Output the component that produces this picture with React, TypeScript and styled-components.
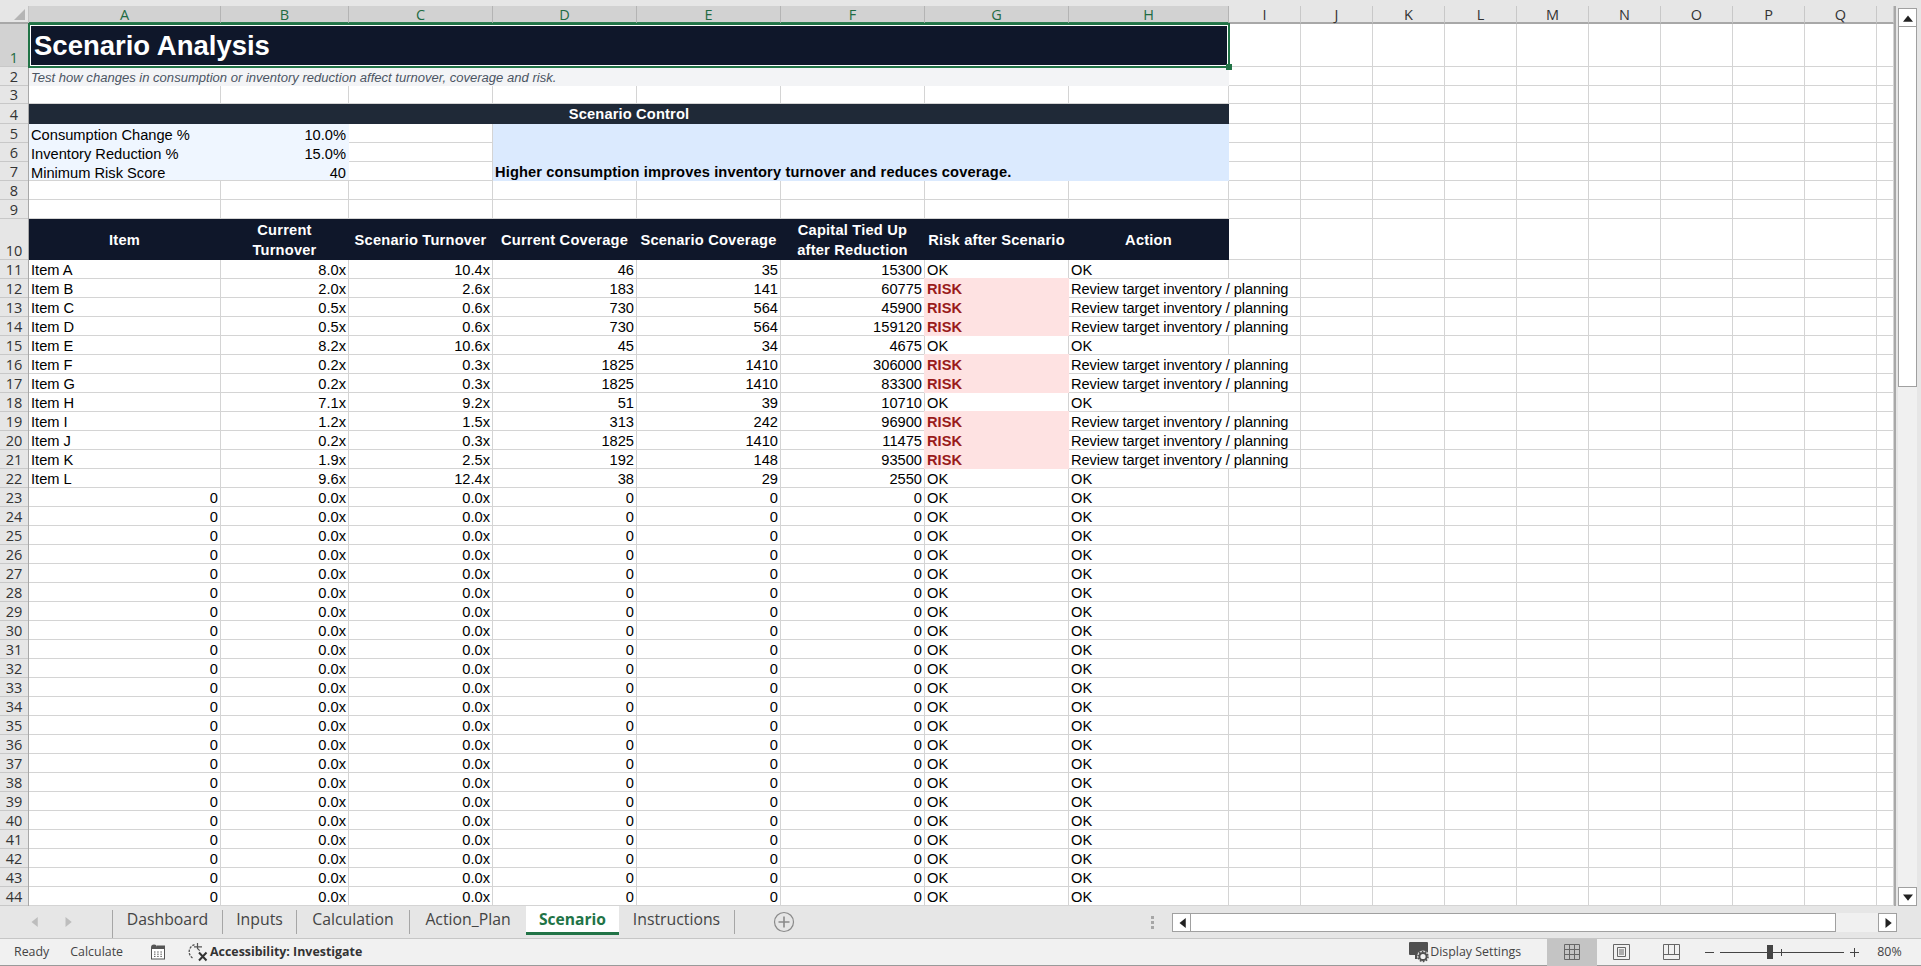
import React from "react";
import styled, { createGlobalStyle } from "styled-components";

const Global = createGlobalStyle`
  html, body { margin: 0; padding: 0; background: #e6e6e6; overflow: hidden; }
  #root { width: 1921px; height: 966px; }
  * { box-sizing: border-box; }
`;

const UI = `"Open Sans", "Noto Sans", "Liberation Sans", sans-serif`;
const CELL = `"Liberation Sans", Arial, sans-serif`;
const GRID = "#d4d4d4";

const Page = styled.div`
  width: 1921px;
  height: 966px;
  display: flex;
  flex-direction: column;
  background: #e6e6e6;
  overflow: hidden;
`;
const TopStrip = styled.div`
  height: 6px;
  flex: none;
  background: #e6e6e6;
`;
const Main = styled.div`
  height: 900px;
  flex: none;
  display: flex;
`;
const Sheet = styled.div`
  width: 1896px;
  height: 900px;
  flex: none;
  display: grid;
  grid-template-columns: 29px 192px 128px 144px 144px 144px 144px 144px 160px repeat(9, 72px) 17px;
  grid-template-rows: 18px 43px 19px 18px 20px 19px 19px 19px 19px 19px 41px repeat(34, 19px);
  background: #fff;
  border-right: 2px solid #a8a8a8;
  overflow: hidden;
`;
const Corner = styled.div`
  background: #e6e6e6;
  border-right: 1px solid #c4c4c4;
  border-bottom: 2px solid #a8a8a8;
  position: relative;
  &::after {
    content: "";
    position: absolute;
    right: 3px;
    bottom: 2px;
    border-style: solid;
    border-width: 0 0 11px 11px;
    border-color: transparent transparent #b5b5b5 transparent;
  }
`;
const ColHead = styled.div<{ $on?: boolean }>`
  background: ${(p) => (p.$on ? "#d2d2d2" : "#e6e6e6")};
  color: ${(p) => (p.$on ? "#1f6b43" : "#333")};
  border-right: 1px solid ${(p) => (p.$on ? "#b4b4b4" : "#c8c8c8")};
  border-bottom: 2px solid ${(p) => (p.$on ? "#2d7a50" : "#a8a8a8")};
  font: 14.5px/17px ${UI};
  text-align: center;
`;
const RowHead = styled.div<{ $on?: boolean }>`
  background: ${(p) => (p.$on ? "#d2d2d2" : "#e6e6e6")};
  color: ${(p) => (p.$on ? "#1f6b43" : "#333")};
  box-shadow: inset -1px 0 0 ${(p) => (p.$on ? "#2d7a50" : "#a8a8a8")}, inset 0 -1px 0 #c8c8c8;
  font: 14.5px/18px ${UI};
  display: flex;
  align-items: flex-end;
  justify-content: center;
  padding-right: 1px;
`;
const Cell = styled.div<{ $right?: boolean; $open?: boolean }>`
  display: flex;
  align-items: flex-end;
  justify-content: ${(p) => (p.$right ? "flex-end" : "flex-start")};
  padding: 0 3px 0 2px;
  min-width: 0;
  white-space: nowrap;
  font: 14.67px/18px ${CELL};
  color: #000;
  box-shadow: inset 0 -1px 0 ${GRID} ${(p) => (p.$open ? "" : `, inset -1px 0 0 ${GRID}`)};
`;
const ActionCell = styled(Cell)`
  letter-spacing: -0.1px;
`;
const TitleCell = styled.div`
  grid-column: span 8;
  background: #0f172a;
  color: #fff;
  font: bold 27.5px/44px ${CELL};
  padding-left: 5px;
  position: relative;
  z-index: 2;
  box-shadow: 0 0 0 1px #217346, inset 0 0 0 1px #217346, inset 0 0 0 2px #fff;
  &::after {
    content: "";
    position: absolute;
    right: -3px;
    bottom: -3px;
    width: 6px;
    height: 6px;
    background: #217346;
  }
`;
const SubtitleCell = styled.div`
  grid-column: span 8;
  background: #f3f4f6;
  color: #4b5563;
  font: italic 13.05px/20px ${CELL};
  padding: 1px 0 0 2px;
`;
const BandCell = styled.div`
  grid-column: span 8;
  background: #1f2937;
  color: #fff;
  font: bold 14.67px/21px ${CELL};
  letter-spacing: 0.15px;
  text-align: center;
`;
const InputCell = styled(Cell)<{ $last?: boolean }>`
  background: #eff6ff;
  align-items: flex-start;
  padding-top: 2px;
  box-shadow: ${(p) => (p.$last ? `inset 0 -1px 0 ${GRID}` : "none")};
`;
const NoteCell = styled.div`
  grid-column: span 5;
  grid-row: span 3;
  background: #dbeafe;
  font: bold 14.67px/18px ${CELL};
  letter-spacing: 0.12px;
  color: #000;
  display: flex;
  align-items: flex-end;
  padding: 0 2px;
`;
const HeadCell = styled.div`
  background: #0f172a;
  color: #fff;
  font: bold 14.67px/20px ${CELL};
  letter-spacing: 0.2px;
  display: flex;
  align-items: center;
  justify-content: center;
  text-align: center;
  padding-right: 1px;
`;
const RiskCell = styled.div`
  background: #fee2e2;
  color: #991b1b;
  font: bold 14.67px/18px ${CELL};
  margin: -1px 0 0 -1px;
  padding: 0 3px;
  display: flex;
  align-items: flex-end;
`;

const TabBar = styled.div`
  height: 32px;
  flex: none;
  display: flex;
  align-items: flex-start;
  background: #e6e6e6;
`;
const TabNav = styled.div`
  width: 112px;
  height: 32px;
  flex: none;
  display: flex;
  align-items: center;
  gap: 24px;
  padding-left: 29px;
`;
const Tabs = styled.div`
  display: flex;
  height: 29px;
  border-left: 1px solid #a6a6a6;
  margin-top: 4px;
`;
const Tab = styled.div<{ $w: number }>`
  width: ${(p) => p.$w}px;
  height: 24px;
  border-right: 1px solid #a6a6a6;
  color: #444;
  font: 15.8px/18px ${UI};
  text-align: center;
`;
const ActiveTab = styled.div<{ $w: number }>`
  width: ${(p) => p.$w}px;
  height: 29px;
  margin: -4px 0 0 -1px;
  background: #fff;
  border-bottom: 3px solid #217346;
  color: #217346;
  font: bold 15.6px/26px ${UI};
  text-align: center;
`;
const AddButton = styled.div`
  margin: 5px 0 0 38px;
  width: 22px;
  height: 22px;
  flex: none;
  display: flex;
`;
const Dots = styled.div`
  margin: 10px 0 0 356px;
  width: 3px;
  height: 13px;
  flex: none;
  background: repeating-linear-gradient(#a6a6a6 0 3px, transparent 3px 5px);
`;
const HScroll = styled.div`
  margin: 7px 0 0 18px;
  width: 725px;
  height: 19px;
  flex: none;
  display: flex;
  background: #f0f0f0;
`;
const ScrollBtn = styled.div`
  width: 19px;
  height: 19px;
  flex: none;
  background: #fff;
  border: 1px solid #a0a0a0;
  display: flex;
  align-items: center;
  justify-content: center;
`;
const HThumb = styled.div`
  width: 645px;
  flex: none;
  background: #fff;
  border: 1px solid #a0a0a0;
  border-left: none;
`;
const HTrack = styled.div`
  flex: 1;
`;
const VScroll = styled.div`
  flex: 1;
  display: flex;
  flex-direction: column;
  padding: 2px 4px 0 2px;
  background: #e6e6e6;
`;
const VThumb = styled.div`
  height: 360px;
  flex: none;
  background: #fff;
  border: 1px solid #a0a0a0;
  border-top: none;
`;
const VTrack = styled.div`
  flex: 1;
  background: #f0f0f0;
`;
const Status = styled.div`
  height: 28px;
  flex: none;
  display: flex;
  align-items: center;
  background: #f1f1f1;
  border-top: 1px solid #c6c6c6;
  border-bottom: 1px solid #9a9a9a;
  color: #444;
  font: 12.4px/18px ${UI};
`;
const StatusText = styled.span<{ $ml: number }>`
  margin-left: ${(p) => p.$ml}px;
  flex: none;
`;
const StatusIcon = styled.div<{ $ml: number }>`
  margin-left: ${(p) => p.$ml}px;
  display: flex;
  flex: none;
`;
const A11yText = styled.span`
  margin-left: 1px;
  flex: none;
  font-weight: 700;
  color: #333;
`;
const ViewButton = styled.div`
  margin-left: 26px;
  width: 50px;
  height: 27px;
  flex: none;
  background: #c4c4c4;
  display: flex;
  align-items: center;
  justify-content: center;
`;
const Zoom = styled.div`
  margin-left: 6px;
  width: 124px;
  height: 1px;
  flex: none;
  background: #444;
  position: relative;
`;
const ZoomThumb = styled.div`
  position: absolute;
  left: 47px;
  top: -7px;
  width: 6px;
  height: 14px;
  background: #444;
`;
const ZoomTick = styled.div`
  position: absolute;
  left: 61px;
  top: -3px;
  width: 1px;
  height: 7px;
  background: #444;
`;

const cols = ["A", "B", "C", "D", "E", "F", "G", "H"];
const extraCols = ["I", "J", "K", "L", "M", "N", "O", "P", "Q", ""];

type Row = [string, string, string, number, number, number];
const items: Row[] = [
  ["Item A", "8.0x", "10.4x", 46, 35, 15300],
  ["Item B", "2.0x", "2.6x", 183, 141, 60775],
  ["Item C", "0.5x", "0.6x", 730, 564, 45900],
  ["Item D", "0.5x", "0.6x", 730, 564, 159120],
  ["Item E", "8.2x", "10.6x", 45, 34, 4675],
  ["Item F", "0.2x", "0.3x", 1825, 1410, 306000],
  ["Item G", "0.2x", "0.3x", 1825, 1410, 83300],
  ["Item H", "7.1x", "9.2x", 51, 39, 10710],
  ["Item I", "1.2x", "1.5x", 313, 242, 96900],
  ["Item J", "0.2x", "0.3x", 1825, 1410, 11475],
  ["Item K", "1.9x", "2.5x", 192, 148, 93500],
  ["Item L", "9.6x", "12.4x", 38, 29, 2550],
];
const riskItems = new Set(["Item B", "Item C", "Item D", "Item F", "Item G", "Item I", "Item J", "Item K"]);

const Filler = () => (
  <>
    {extraCols.map((c, i) => (
      <Cell key={i} />
    ))}
  </>
);
const Blank = ({ n }: { n: number }) => (
  <>
    {Array.from({ length: n }, (_, i) => (
      <Cell key={i} />
    ))}
  </>
);

const Tri = ({ dir, color = "#222", size = 8 }: { dir: "l" | "r" | "u" | "d"; color?: string; size?: number }) => {
  const pts = { l: "7,0 7,8 2,4", r: "2,0 2,8 7,4", u: "0,7 8,7 4,2", d: "0,2 8,2 4,7" }[dir];
  return (
    <svg width={size} height={size} viewBox="0 0 8 8">
      <polygon points={pts} fill={color} />
    </svg>
  );
};

const DataRow = ({ row, n }: { row: Row; n: number }) => {
  const risk = riskItems.has(row[0]);
  return (
    <>
      <RowHead>{n}</RowHead>
      <Cell>{row[0]}</Cell>
      <Cell $right>{row[1]}</Cell>
      <Cell $right>{row[2]}</Cell>
      <Cell $right>{row[3]}</Cell>
      <Cell $right>{row[4]}</Cell>
      <Cell $right>{row[5]}</Cell>
      {risk ? <RiskCell>RISK</RiskCell> : <Cell>OK</Cell>}
      {risk ? <ActionCell $open>Review target inventory / planning</ActionCell> : <Cell>OK</Cell>}
      <Filler />
    </>
  );
};

const ZeroRow = ({ n }: { n: number }) => (
  <>
    <RowHead>{n}</RowHead>
    <Cell $right>0</Cell>
    <Cell $right>0.0x</Cell>
    <Cell $right>0.0x</Cell>
    <Cell $right>0</Cell>
    <Cell $right>0</Cell>
    <Cell $right>0</Cell>
    <Cell>OK</Cell>
    <Cell>OK</Cell>
    <Filler />
  </>
);

const MacroIcon = () => (
  <svg width="16" height="16" viewBox="0 0 16 16">
    <circle cx="4" cy="3.5" r="3" fill="#555" />
    <rect x="1.5" y="4.5" width="13" height="10.5" fill="#fff" stroke="#555" />
    <rect x="7" y="1.5" width="8" height="3.5" fill="#555" />
    <path d="M4 8h1.5M7.2 8h1.5M10.4 8h1.5M4 10.2h1.5M7.2 10.2h1.5M10.4 10.2h1.5M4 12.4h1.5M7.2 12.4h1.5M10.4 12.4h1.5" stroke="#555" />
  </svg>
);
const A11yIcon = () => (
  <svg width="21" height="20" viewBox="0 0 21 20" fill="none">
    <path d="M6.5 2.6A7.5 7.5 0 0 0 4.5 16" stroke="#555" strokeWidth="1.3" strokeDasharray="2.4 1.2" />
    <path d="M9.5 1v5.5l2.2 2.2M6 4.8h8" stroke="#555" strokeWidth="1.2" />
    <path d="M11 10.5l7.5 8M18.5 10.5l-7.5 8" stroke="#333" strokeWidth="2" />
  </svg>
);
const DisplayIcon = () => (
  <svg width="21" height="24" viewBox="0 0 21 24">
    <rect x="0" y="2" width="19" height="13" rx="1" fill="#505050" />
    <rect x="6" y="15" width="5" height="4" fill="#505050" />
    <circle cx="14" cy="16.5" r="6" fill="#f1f1f1" />
    <circle cx="14" cy="16.5" r="3.6" fill="none" stroke="#505050" strokeWidth="2" />
    <circle cx="14" cy="16.5" r="5" fill="none" stroke="#505050" strokeWidth="1.6" strokeDasharray="1.7 1.4" />
  </svg>
);
const NormalIcon = () => (
  <svg width="16" height="16" viewBox="0 0 16 16" fill="none" stroke="#666">
    <path d="M.5.5h15v15H.5zM5.5.5v15M10.5.5v15M.5 5.5h15M.5 10.5h15" />
  </svg>
);
const LayoutIcon = () => (
  <svg width="17" height="16" viewBox="0 0 17 16" fill="none" stroke="#666">
    <path d="M.5.5h16v15H.5zM4.5 3.5h8v9h-8zM6 6h5M6 8h5M6 10h5" />
  </svg>
);
const BreakIcon = () => (
  <svg width="17" height="16" viewBox="0 0 17 16" fill="none" stroke="#666">
    <path d="M.5.5h16v15H.5zM.5 10.5h16M5.5.5v10M11.5.5v10" />
  </svg>
);
const Minus = () => (
  <svg width="9" height="9" viewBox="0 0 9 9"><path d="M0 4.5h9" stroke="#444" /></svg>
);
const Plus = () => (
  <svg width="9" height="9" viewBox="0 0 9 9"><path d="M0 4.5h9M4.5 0v9" stroke="#444" /></svg>
);

export default function App() {
  return (
    <Page>
      <Global />
      <TopStrip />
      <Main>
        <Sheet>
          <Corner />
          {cols.map((c) => (
            <ColHead key={c} $on>{c}</ColHead>
          ))}
          {extraCols.map((c, i) => (
            <ColHead key={i}>{c}</ColHead>
          ))}

          <RowHead $on>1</RowHead>
          <TitleCell>Scenario Analysis</TitleCell>
          <Filler />

          <RowHead>2</RowHead>
          <SubtitleCell>Test how changes in consumption or inventory reduction affect turnover, coverage and risk.</SubtitleCell>
          <Filler />

          <RowHead>3</RowHead>
          <Blank n={8} />
          <Filler />

          <RowHead>4</RowHead>
          <BandCell>Scenario Control</BandCell>
          <Filler />

          <RowHead>5</RowHead>
          <InputCell>Consumption Change %</InputCell>
          <InputCell $right>10.0%</InputCell>
          <Cell />
          <NoteCell>Higher consumption improves inventory turnover and reduces coverage.</NoteCell>
          <Filler />

          <RowHead>6</RowHead>
          <InputCell>Inventory Reduction %</InputCell>
          <InputCell $right>15.0%</InputCell>
          <Cell />
          <Filler />

          <RowHead>7</RowHead>
          <InputCell $last>Minimum Risk Score</InputCell>
          <InputCell $last $right>40</InputCell>
          <Cell />
          <Filler />

          <RowHead>8</RowHead>
          <Blank n={8} />
          <Filler />

          <RowHead>9</RowHead>
          <Blank n={8} />
          <Filler />

          <RowHead>10</RowHead>
          <HeadCell>Item</HeadCell>
          <HeadCell>Current<br />Turnover</HeadCell>
          <HeadCell>Scenario Turnover</HeadCell>
          <HeadCell>Current Coverage</HeadCell>
          <HeadCell>Scenario Coverage</HeadCell>
          <HeadCell>Capital Tied Up<br />after Reduction</HeadCell>
          <HeadCell>Risk after Scenario</HeadCell>
          <HeadCell>Action</HeadCell>
          <Filler />

          {items.map((r, i) => (
            <DataRow key={r[0]} row={r} n={11 + i} />
          ))}
          {Array.from({ length: 22 }, (_, i) => (
            <ZeroRow key={i} n={23 + i} />
          ))}
        </Sheet>
        <VScroll>
          <ScrollBtn><Tri dir="u" size={10} /></ScrollBtn>
          <VThumb />
          <VTrack />
          <ScrollBtn><Tri dir="d" size={10} /></ScrollBtn>
        </VScroll>
      </Main>
      <TabBar>
        <TabNav>
          <Tri dir="l" color="#bdbdbd" size={10} />
          <Tri dir="r" color="#bdbdbd" size={10} />
        </TabNav>
        <Tabs>
          <Tab $w={110}>Dashboard</Tab>
          <Tab $w={74}>Inputs</Tab>
          <Tab $w={113}>Calculation</Tab>
          <Tab $w={117}>Action_Plan</Tab>
          <ActiveTab $w={93}>Scenario</ActiveTab>
          <Tab $w={116}>Instructions</Tab>
        </Tabs>
        <AddButton>
          <svg width="22" height="22" viewBox="0 0 22 22" fill="none">
            <circle cx="11" cy="11" r="9.5" stroke="#8a8a8a" strokeWidth="1.2" />
            <path d="M11 5.5v11M5.5 11h11" stroke="#8a8a8a" strokeWidth="1.6" />
          </svg>
        </AddButton>
        <Dots />
        <HScroll>
          <ScrollBtn><Tri dir="l" size={10} /></ScrollBtn>
          <HThumb />
          <HTrack />
          <ScrollBtn><Tri dir="r" size={10} /></ScrollBtn>
        </HScroll>
      </TabBar>
      <Status>
        <StatusText $ml={14}>Ready</StatusText>
        <StatusText $ml={21}>Calculate</StatusText>
        <StatusIcon $ml={27}><MacroIcon /></StatusIcon>
        <StatusIcon $ml={22}><A11yIcon /></StatusIcon>
        <A11yText>Accessibility: Investigate</A11yText>
        <StatusIcon $ml={1047}><DisplayIcon /></StatusIcon>
        <StatusText $ml={0}>Display Settings</StatusText>
        <ViewButton><NormalIcon /></ViewButton>
        <StatusIcon $ml={16}><LayoutIcon /></StatusIcon>
        <StatusIcon $ml={33}><BreakIcon /></StatusIcon>
        <StatusIcon $ml={25}><Minus /></StatusIcon>
        <Zoom>
          <ZoomThumb />
          <ZoomTick />
        </Zoom>
        <StatusIcon $ml={6}><Plus /></StatusIcon>
        <StatusText $ml={18}>80%</StatusText>
      </Status>
    </Page>
  );
}
